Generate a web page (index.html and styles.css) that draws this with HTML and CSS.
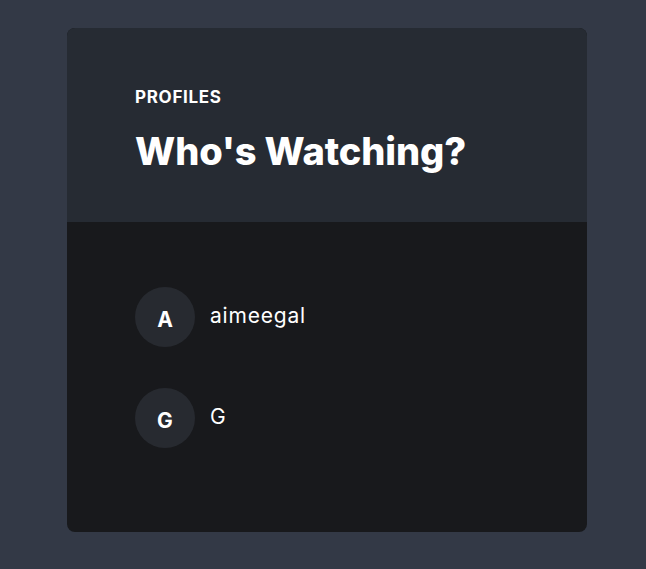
FILE: index.html
```html
<!DOCTYPE html>
<html lang="en">
<head>
  <meta charset="UTF-8">
  <title>Profiles</title>
  <link rel="stylesheet" href="styles.css">
</head>
<body>

  <div class="card">
    <div class="card-header">
      <p class="eyebrow">PROFILES</p>
      <h1>Who's Watching?</h1>
    </div>

    <ul class="profiles">
      <li class="profile">
        <span class="avatar">A</span>
        <span class="name">aimeegal</span>
      </li>
      <li class="profile">
        <span class="avatar">G</span>
        <span class="name">G</span>
      </li>
    </ul>
  </div>

</body>
</html>
```

FILE: styles.css
```css
body {
  margin: 0;
  padding: 28px 0 37px 67px;
  background-color: #333946;
  font-family: Inter, "Noto Sans", sans-serif;
  color: #fff;
}

.card {
  width: 520px;
  border-radius: 8px;
  overflow: hidden;
  background-color: #18191c;
}

.card-header {
  background-color: #262b33;
  padding: 59px 68px 0;
  height: 135px;
}

.eyebrow {
  margin: 0;
  font-size: 17px;
  font-weight: 700;
  letter-spacing: 0.7px;
}

h1 {
  margin: 21px 0 0;
  font-size: 38px;
  font-weight: 800;
  letter-spacing: -0.1px;
}

.profiles {
  list-style: none;
  margin: 0;
  padding: 65px 68px 84px;
  display: flex;
  flex-direction: column;
  gap: 41px;
}

.profile {
  display: flex;
  align-items: center;
  gap: 15px;
}

.avatar {
  width: 60px;
  height: 60px;
  border-radius: 50%;
  background-color: #272a30;
  display: flex;
  align-items: center;
  justify-content: center;
  font-size: 21px;
  font-weight: 700;
  padding-top: 4px;
  box-sizing: border-box;
}

.name {
  font-size: 21px;
  letter-spacing: 0.8px;
  margin-top: -3px;
}
```
